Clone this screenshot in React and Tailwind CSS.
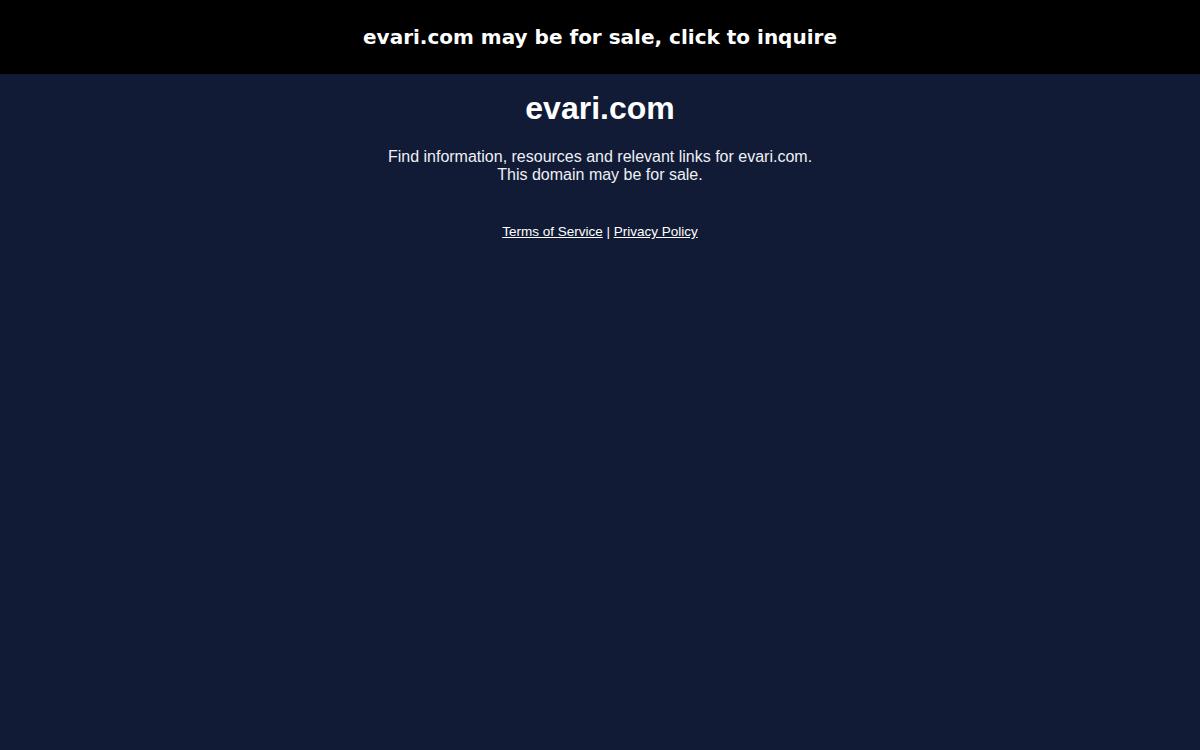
import React from "react";

const App = () => {
  return (
    <div className="min-h-screen w-full bg-[#111b36] text-white" style={{ fontFamily: '"Liberation Sans", Arial, sans-serif' }}>
      {/* Sale banner */}
      <a
        href="#"
        className="flex h-[74px] w-full items-center justify-center bg-black text-[20px] font-bold text-white"
        style={{ fontFamily: '"DejaVu Sans", sans-serif' }}
      >
        evari.com may be for sale, click to inquire
      </a>

      {/* Content */}
      <div className="flex flex-col items-center pt-4 text-center">
        <h1 className="text-[32px] font-bold leading-[37px]">evari.com</h1>
        <p className="mt-[21px] text-[16px] leading-[18px] text-[#eef0f5]">
          Find information, resources and relevant links for evari.com.
          <br />
          This domain may be for sale.
        </p>
        <div className="mt-10 text-[13.5px] leading-[15px]">
          <a href="#" className="underline">Terms of Service</a> | <a href="#" className="underline">Privacy Policy</a>
        </div>
      </div>
    </div>
  );
};

export default App;
